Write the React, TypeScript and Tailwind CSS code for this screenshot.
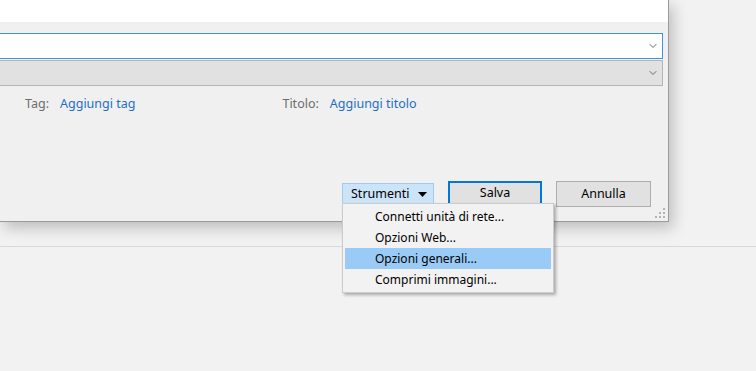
import { ChevronDown } from 'lucide-react'

const font = { fontFamily: '"Noto Sans", "Open Sans", sans-serif' }

function Combo({ active }: { active?: boolean }) {
  return (
    <div
      className={
        active
          ? 'h-[26px] w-[663px] border border-l-0 border-[#3c94e0] bg-white flex items-center justify-end pr-[3px]'
          : 'h-[26px] w-[663px] border border-l-0 border-[#b5b5b5] bg-[#e1e1e1] flex items-center justify-end pr-[3px]'
      }
    >
      <ChevronDown className="w-[12px] h-[12px] text-[#6a6a6a]" strokeWidth={2} />
    </div>
  )
}

const menuItems = ['Connetti unità di rete...', 'Opzioni Web...', 'Opzioni generali...', 'Comprimi immagini...']

export default function App() {
  return (
    <div className="relative w-[756px] h-[371px] bg-[#f2f2f2] overflow-hidden text-[12px] text-black" style={font}>
      <div className="relative w-[669px] h-[222px] bg-[#f0f0f0] border-r border-b border-[#9a9a9a] shadow-[4px_6px_14px_rgba(0,0,0,0.22)]">
        <div className="h-[22px] bg-white" />
        <div className="pt-[11px] flex flex-col gap-[1px]">
          <Combo active />
          <Combo />
        </div>
        <div className="flex items-center h-[36px] text-[12.5px] text-[#6d6d6d]">
          <span className="ml-[25px]">Tag:</span>
          <span className="ml-[11px] text-[#1f6fc6]">Aggiungi tag</span>
          <span className="ml-[147px]">Titolo:</span>
          <span className="ml-[11px] text-[#1f6fc6]">Aggiungi titolo</span>
        </div>
        <div className="flex items-start mt-[59px] ml-[342px] gap-[14px] text-[12.5px]">
          <div className="mt-[2px] w-[92px] h-[23px] bg-[#cce4f7] border border-[#9fcdf2] flex items-center pl-[8px] pr-[6px] justify-between">
            <span>Strumenti</span>
            <svg width="9" height="5" viewBox="0 0 9 5"><path d="M0 0h9L4.5 5z" fill="#000" /></svg>
          </div>
          <div className="w-[94px] h-[25px] bg-[#e1e1e1] border-2 border-[#0078d7] flex items-center justify-center">Salva</div>
          <div className="w-[95px] h-[26px] bg-[#e1e1e1] border border-[#adadad] flex items-center justify-center">Annulla</div>
        </div>
        <svg className="absolute right-[3px] bottom-[3px]" width="10" height="10" viewBox="0 0 10 10">
          <g fill="#b4b4b4">
            <rect x="8" y="0" width="2" height="2" />
            <rect x="4" y="4" width="2" height="2" />
            <rect x="8" y="4" width="2" height="2" />
            <rect x="0" y="8" width="2" height="2" />
            <rect x="4" y="8" width="2" height="2" />
            <rect x="8" y="8" width="2" height="2" />
          </g>
        </svg>
      </div>
      <div className="mt-[24px] h-[1px] bg-[#d8d8d8]" />

      <div className="absolute left-[342px] top-[203px] w-[212px] h-[90px] bg-[#f2f2f2] border border-[#cccccc] shadow-[2px_2px_3px_rgba(0,0,0,0.3)] py-[2px] px-[2px] text-[12px]">
        {menuItems.map((t, i) => (
          <div
            key={t}
            className={
              i === 2
                ? 'h-[21px] bg-[#99cbf6] pl-[30px] flex items-center'
                : 'h-[21px] pl-[30px] flex items-center'
            }
          >
            {t}
          </div>
        ))}
      </div>
    </div>
  )
}
